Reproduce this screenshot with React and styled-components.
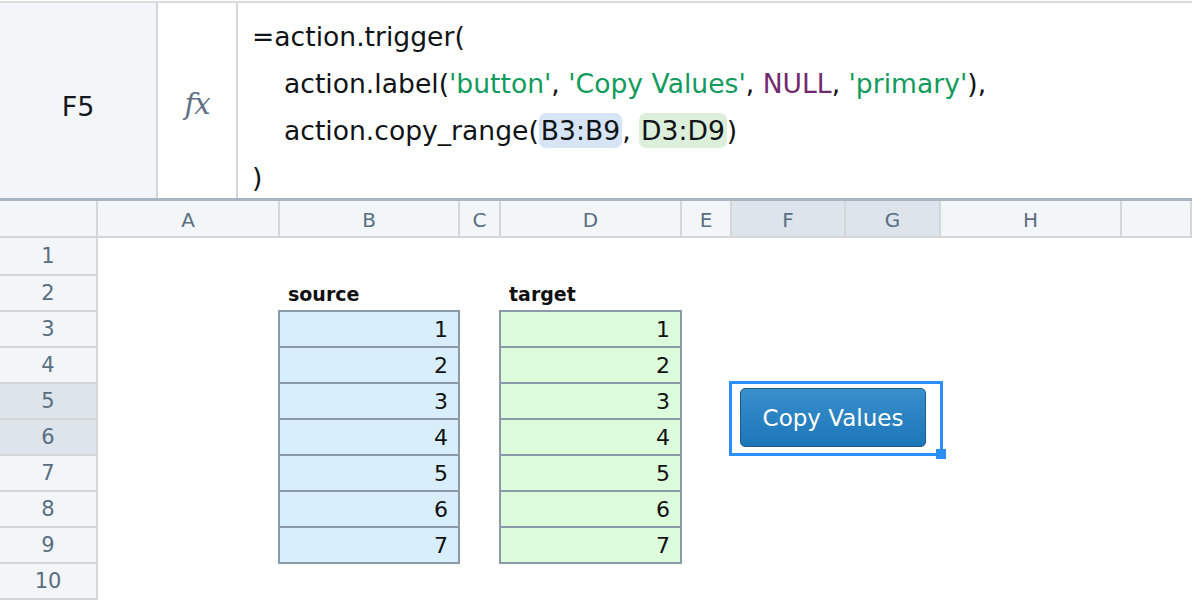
import React from "react";
import styled, { createGlobalStyle } from "styled-components";

const GlobalStyle = createGlobalStyle`
  html, body {
    margin: 0;
    padding: 0;
    background: #ffffff;
    overflow: hidden;
  }
  body {
    font-family: "DejaVu Sans", sans-serif;
    color: #15191d;
  }
`;

const Page = styled.div`
  width: 1192px;
  height: 600px;
  overflow: hidden;
`;

const FormulaBar = styled.div`
  display: flex;
  box-sizing: border-box;
  height: 200px;
  margin-top: 1px;
  border-top: 2px solid #d9dcdf;
  border-bottom: 3px solid #a9b5c1;
`;

const NameBox = styled.div`
  box-sizing: border-box;
  width: 158px;
  display: flex;
  align-items: center;
  justify-content: center;
  padding-top: 12px;
  background: #f3f6f9;
  border-right: 2px solid #d4d6d8;
  font-size: 27px;
  color: #15191d;
`;

const FxBox = styled.div`
  box-sizing: border-box;
  width: 80px;
  display: flex;
  align-items: center;
  justify-content: center;
  padding-top: 6px;
  border-right: 2px solid #d4d6d8;
  font-family: "DejaVu Serif", serif;
  font-style: italic;
  font-size: 29px;
  letter-spacing: -1px;
  color: #5f7184;
`;

const Formula = styled.div`
  flex: 1;
  padding: 10px 0 0 14px;
  font-size: 26.6px;
  line-height: 47px;
  white-space: nowrap;
  color: #111417;
`;

const Line = styled.div`
  padding-left: ${(p) => (p.$indent ? "32px" : "0")};
`;

const Str = styled.span`
  color: #119b5d;
`;

const Keyword = styled.span`
  color: #722a6e;
`;

const RangeChip = styled.span`
  display: inline-block;
  line-height: 35px;
  padding: 0 2px;
  border-radius: 7px;
  background: ${(p) => (p.$tone === "green" ? "#dcefdb" : "#d6e4f6")};
`;

const Sheet = styled.div`
  position: relative;
  display: grid;
  grid-template-columns: 98px 182px 180px 41px 181px 50px 114px 95px 181px 1fr;
  grid-template-rows: 37px 38px repeat(9, 36px);
`;

const HeaderCell = styled.div`
  box-sizing: border-box;
  display: flex;
  align-items: center;
  justify-content: center;
  padding-top: 3px;
  background: ${(p) => (p.$active ? "#dde4eb" : "#f3f6f9")};
  border-right: 2px solid #d4d6d8;
  border-bottom: 2px solid #d4d6d8;
  font-size: 20px;
  color: #5a6e81;
`;

const RowHeader = styled(HeaderCell)`
  font-size: 21px;
  padding-top: 0;
`;

const Cell = styled.div`
  min-width: 0;
`;

const Label = styled.div`
  display: flex;
  align-items: center;
  padding-left: 8px;
  font-size: 19px;
  font-weight: bold;
  color: #111;
`;

const ValueCell = styled.div`
  margin: -2px 0 0 -2px;
  display: flex;
  align-items: center;
  justify-content: flex-end;
  padding-right: 10px;
  border: 2px solid #8a9aaa;
  background: ${(p) => (p.$tone === "green" ? "#dcfcdc" : "#d9eefb")};
  font-size: 22px;
  color: #111;
`;

const Selection = styled.div`
  position: absolute;
  left: 729px;
  top: 180px;
  box-sizing: border-box;
  width: 214px;
  height: 75px;
  padding: 4px 0 0 8px;
  border: 3px solid #2b8ff6;
`;

const Handle = styled.div`
  position: absolute;
  right: -6px;
  bottom: -6px;
  width: 10px;
  height: 10px;
  background: #2b8ff6;
`;

const ActionButton = styled.button`
  box-sizing: border-box;
  width: 186px;
  height: 59px;
  padding: 0;
  border: 1.5px solid #1d5a89;
  border-radius: 5px;
  background: linear-gradient(#3b8fcc, #1b76b8);
  color: #ffffff;
  font-family: "DejaVu Sans", sans-serif;
  font-size: 23px;
  cursor: pointer;
`;

const columns = ["A", "B", "C", "D", "E", "F", "G", "H", ""];
const activeColumns = ["F", "G"];
const activeRows = [5, 6];
const rows = [1, 2, 3, 4, 5, 6, 7, 8, 9, 10];

const renderCell = (row, col) => {
  const key = `${col}${row}`;
  if (row === 2 && col === "B") return <Label key={key}>source</Label>;
  if (row === 2 && col === "D") return <Label key={key}>target</Label>;
  if (row >= 3 && row <= 9 && (col === "B" || col === "D")) {
    return (
      <ValueCell key={key} $tone={col === "D" ? "green" : "blue"}>
        {row - 2}
      </ValueCell>
    );
  }
  return <Cell key={key} />;
};

const App = () => {
  return (
    <Page>
      <GlobalStyle />
      <FormulaBar>
        <NameBox>F5</NameBox>
        <FxBox>fx</FxBox>
        <Formula>
          <Line>=action.trigger(</Line>
          <Line $indent>
            action.label(<Str>'button'</Str>, <Str>'Copy Values'</Str>,{" "}
            <Keyword>NULL</Keyword>, <Str>'primary'</Str>),
          </Line>
          <Line $indent>
            action.copy_range(<RangeChip>B3:B9</RangeChip>,{" "}
            <RangeChip $tone="green">D3:D9</RangeChip>)
          </Line>
          <Line>)</Line>
        </Formula>
      </FormulaBar>

      <Sheet>
        <HeaderCell />
        {columns.map((col, i) => (
          <HeaderCell key={`h${i}`} $active={activeColumns.includes(col)}>
            {col}
          </HeaderCell>
        ))}
        {rows.map((row) => (
          <React.Fragment key={row}>
            <RowHeader $active={activeRows.includes(row)}>{row}</RowHeader>
            {columns.map((col, i) => renderCell(row, col || `X${i}`))}
          </React.Fragment>
        ))}

        <Selection>
          <ActionButton>Copy Values</ActionButton>
          <Handle />
        </Selection>
      </Sheet>
    </Page>
  );
};

export default App;
